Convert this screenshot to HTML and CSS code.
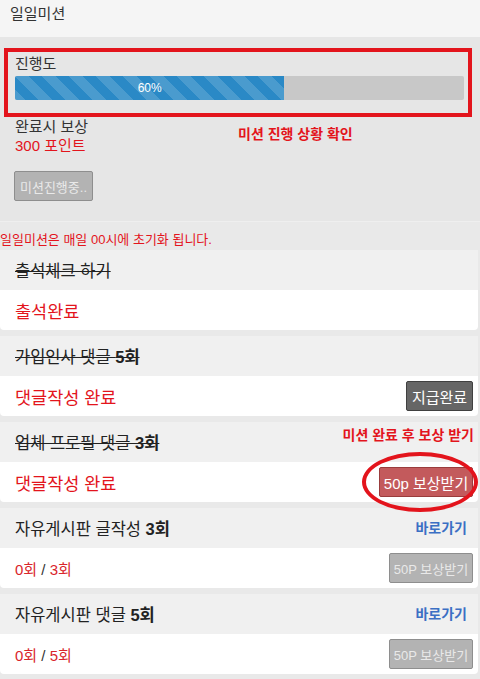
FILE: index.html
```html
<!DOCTYPE html>
<html lang="ko">
<head>
    <meta charset="UTF-8">
    <meta name="viewport" content="width=device-width, initial-scale=1.0">
    <title>일일미션</title>
    <link rel="stylesheet" href="styles.css">
</head>
<body>
    <div class="topbar">일일미션</div>

    <div class="status">
        <div class="mark-box">
            <div class="label">진행도</div>
            <div class="progress">
                <div class="progress-bar" style="width: 60%;">60%</div>
            </div>
        </div>
        <div class="reward">
            <p class="reward-title">완료시 보상</p>
            <p class="reward-point">300 포인트</p>
            <button type="button" class="btn btn-off btn-wait">미션진행중..</button>
        </div>
        <span class="note note-status">미션 진행 상황 확인</span>
    </div>

    <p class="notice">일일미션은 매일 00시에 초기화 됩니다.</p>

    <div class="mission">
        <div class="mission-head">
            <span class="title done">출석체크 하기</span>
        </div>
        <div class="mission-body">
            <span class="result">출석완료</span>
        </div>
    </div>

    <div class="mission">
        <div class="mission-head">
            <span class="title done">가입인사 댓글 <b>5회</b></span>
        </div>
        <div class="mission-body">
            <span class="result">댓글작성 완료</span>
            <button type="button" class="btn btn-paid">지급완료</button>
        </div>
    </div>

    <div class="mission mission-marked">
        <div class="mission-head">
            <span class="title done">업체 프로필 댓글 <b>3회</b></span>
        </div>
        <div class="mission-body">
            <span class="result">댓글작성 완료</span>
            <button type="button" class="btn btn-reward">50p 보상받기</button>
        </div>
        <span class="note note-reward">미션 완료 후 보상 받기</span>
        <span class="circle"></span>
    </div>

    <div class="mission">
        <div class="mission-head">
            <span class="title">자유게시판 글작성 <b>3회</b></span>
            <a href="#" class="go">바로가기</a>
        </div>
        <div class="mission-body">
            <span class="count"><em>0회</em> / <em>3회</em></span>
            <button type="button" class="btn btn-off">50P 보상받기</button>
        </div>
    </div>

    <div class="mission">
        <div class="mission-head">
            <span class="title">자유게시판 댓글 <b>5회</b></span>
            <a href="#" class="go">바로가기</a>
        </div>
        <div class="mission-body">
            <span class="count"><em>0회</em> / <em>5회</em></span>
            <button type="button" class="btn btn-off">50P 보상받기</button>
        </div>
    </div>
</body>
</html>
```

FILE: styles.css
```css
body {
    margin: 0;
    font-family: "Liberation Sans", "Noto Sans CJK KR", sans-serif;
    background-color: #e9e9e9;
    color: #333;
}
p {
    margin: 0;
}
.topbar {
    height: 37px;
    box-sizing: border-box;
    padding: 4px 10px 0;
    font-size: 15px;
    line-height: 20px;
    background-color: #f5f5f5;
    box-shadow: 0 1px 2px rgba(0, 0, 0, 0.2);
    position: relative;
}
.status {
    position: relative;
    padding: 11px 8px 0 4px;
    height: 185px;
    box-sizing: border-box;
    background-color: #e6e6e6;
    border-bottom: 1px solid #efefef;
}
.mark-box {
    border: 4px solid #e3141c;
    padding: 2px 4px 13px 7px;
}
.label {
    font-size: 15px;
    line-height: 20px;
    margin-bottom: 2px;
}
.progress {
    height: 24px;
    background-color: #c8c8c8;
    border-radius: 2px;
    overflow: hidden;
}
.progress-bar {
    height: 100%;
    color: #fff;
    font-size: 12px;
    line-height: 24px;
    text-align: center;
    background-color: #2a89c6;
    background-image: linear-gradient(45deg, rgba(255, 255, 255, 0.15) 25%, transparent 25%, transparent 50%, rgba(255, 255, 255, 0.15) 50%, rgba(255, 255, 255, 0.15) 75%, transparent 75%, transparent);
    background-size: 27px 27px;
}
.reward {
    padding-left: 11px;
    margin-top: 1px;
}
.reward-title {
    font-size: 15px;
    line-height: 18px;
}
.reward-point {
    font-size: 15px;
    line-height: 19px;
    color: #e3141c;
}
.btn {
    font-family: inherit;
    border-radius: 2px;
    padding: 0;
    height: 30px;
    cursor: pointer;
}
.btn-off {
    background-color: #b3b3b3;
    border: 1px solid #8e8e8e;
    color: #e9e9e9;
    font-size: 13px;
    width: 84px;
}
.btn-off.btn-wait {
    margin-top: 16px;
    margin-left: -1px;
    width: 79px;
}
.btn-paid {
    background-color: #666;
    border: 1px solid #404040;
    color: #fff;
    font-size: 15px;
    width: 67px;
}
.btn-reward {
    background-color: #c35a5c;
    border: 1px solid #9a3c3c;
    color: #fff;
    font-size: 15px;
    width: 94px;
}
.note {
    position: absolute;
    color: #e3141c;
    font-size: 14px;
    font-weight: bold;
    line-height: 18px;
}
.note-status {
    left: 238px;
    top: 88px;
}
.notice {
    color: #e3141c;
    font-size: 13px;
    line-height: 18px;
    padding: 9px 0 1px;
}
.mission {
    position: relative;
    margin: 0 2px 6px 0;
    border-radius: 0 0 4px 4px;
}
.mission-head {
    height: 40px;
    padding: 0 11px 0 15px;
    display: flex;
    align-items: center;
    justify-content: space-between;
    background-color: #f0f0f0;
}
.mission-body {
    height: 40px;
    padding: 0 5px 0 15px;
    display: flex;
    align-items: center;
    justify-content: space-between;
    background-color: #fff;
    border-radius: 0 0 4px 4px;
}
.title {
    font-size: 16.5px;
    color: #222;
}
.title b {
    font-weight: bold;
}
.title.done {
    text-decoration: line-through;
}
.result {
    color: #e3141c;
    font-size: 17.5px;
}
.count {
    font-size: 15px;
    color: #333;
}
.count em {
    font-style: normal;
    color: #d9252b;
}
.go {
    color: #3b6fc4;
    font-size: 14px;
    font-weight: bold;
    text-decoration: none;
    margin-top: -3px;
}
.note-reward {
    right: 4px;
    top: 4px;
}
.circle {
    position: absolute;
    left: 362px;
    top: 30px;
    width: 116px;
    height: 60px;
    box-sizing: border-box;
    border: 4px solid #e3141c;
    border-radius: 50%;
    z-index: 2;
}
```
